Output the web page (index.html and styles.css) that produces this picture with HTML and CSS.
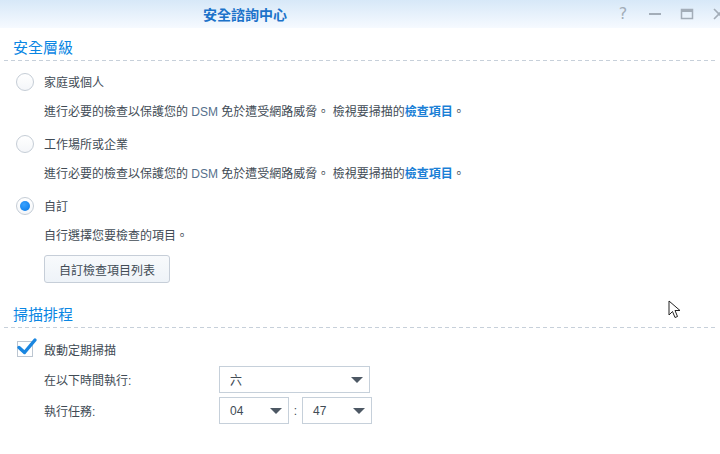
FILE: index.html
```html
<!DOCTYPE html>
<html lang="zh-Hant">
<head>
    <meta charset="UTF-8">
    <meta name="viewport" content="width=device-width, initial-scale=1.0">
    <title>安全諮詢中心</title>
    <link rel="stylesheet" href="styles.css">
</head>
<body>
    <div class="window">
        <header class="titlebar">
            <span class="title">安全諮詢中心</span>
            <div class="controls">
                <span class="ctl ctl-help">?</span>
                <svg class="ctl" width="14" height="14" viewBox="0 0 14 14"><rect x="1" y="6" width="12" height="2" fill="#a3adb8"/></svg>
                <svg class="ctl" width="14" height="14" viewBox="0 0 14 14"><rect x="1.5" y="2.5" width="11" height="9" fill="none" stroke="#a3adb8" stroke-width="1.5"/><rect x="1" y="2" width="12" height="3" fill="#a3adb8"/></svg>
                <svg class="ctl" width="14" height="14" viewBox="0 0 14 14"><path d="M2 2 L12 12 M12 2 L2 12" stroke="#a3adb8" stroke-width="1.6"/></svg>
            </div>
        </header>

        <main class="content">
            <!-- 安全層級 -->
            <h2 class="section-title">安全層級</h2>
            <div class="option">
                <span class="radio"></span>
                <span>家庭或個人</span>
            </div>
            <div class="desc">進行必要的檢查以保護您的 <span class="latin">DSM</span> 免於遭受網路威脅。 檢視要掃描的<a href="#" class="link">檢查項目</a>。</div>
            <div class="option">
                <span class="radio"></span>
                <span>工作場所或企業</span>
            </div>
            <div class="desc">進行必要的檢查以保護您的 <span class="latin">DSM</span> 免於遭受網路威脅。 檢視要掃描的<a href="#" class="link">檢查項目</a>。</div>
            <div class="option">
                <span class="radio checked"></span>
                <span>自訂</span>
            </div>
            <div class="desc">自行選擇您要檢查的項目。</div>
            <div class="desc-btn">
                <button class="button">自訂檢查項目列表</button>
            </div>

            <!-- 掃描排程 -->
            <h2 class="section-title second">掃描排程</h2>
            <div class="option check-row">
                <span class="checkbox">
                    <svg width="22" height="20" viewBox="0 0 22 20"><path d="M3 10.5 L8.5 15.5 L19 3" fill="none" stroke="#1a86e0" stroke-width="3.4" stroke-linecap="round" stroke-linejoin="round"/></svg>
                </span>
                <span>啟動定期掃描</span>
            </div>
            <div class="field">
                <label class="field-label">在以下時間執行:</label>
                <div class="select wide"><span>六</span><i class="arrow"></i></div>
            </div>
            <div class="field">
                <label class="field-label">執行任務:</label>
                <div class="select small"><span>04</span><i class="arrow"></i></div>
                <span class="colon">:</span>
                <div class="select small"><span>47</span><i class="arrow"></i></div>
            </div>
        </main>

        <svg class="cursor" width="14" height="20" viewBox="0 0 14 20"><path d="M1 1 L1 15 L4.5 11.5 L7 17.5 L9.5 16.5 L7 10.5 L12 10.5 Z" fill="#fff" stroke="#222" stroke-width="1"/></svg>
    </div>
</body>
</html>
```

FILE: styles.css
```css
body {
    margin: 0;
    padding: 0;
    background-color: #ffffff;
    font-family: "Liberation Sans", "Noto Sans CJK TC", sans-serif;
    font-size: 12px;
    color: #414b55;
}
.window {
    position: relative;
    width: 720px;
    height: 454px;
    overflow: hidden;
    background-color: #ffffff;
}
.titlebar {
    height: 28px;
    display: flex;
    align-items: center;
    background: linear-gradient(#d7e8f8, #f6faff);
}
.title {
    margin-left: 203px;
    font-family: "Noto Sans CJK TC", sans-serif;
    font-size: 14px;
    font-weight: bold;
    color: #1c72c9;
}
.controls {
    margin-left: auto;
    display: flex;
    align-items: center;
    gap: 18px;
    margin-right: -6px;
}
.ctl {
    display: block;
}
.ctl-help {
    font-family: "DejaVu Sans", sans-serif;
    font-size: 16px;
    line-height: 14px;
    color: #a3adb8;
    width: 14px;
    text-align: center;
}
.content {
    padding: 0 4px;
}
.section-title {
    margin: 9px 0 0;
    padding: 0 0 4px 9px;
    height: 20px;
    line-height: 20px;
    font-size: 15px;
    font-weight: normal;
    color: #0a86e3;
    font-family: "Noto Sans CJK TC", sans-serif;
    background: repeating-linear-gradient(90deg, #c7d0da 0 4px, transparent 4px 7px) bottom / 100% 1px no-repeat;
}
.section-title.second {
    margin-top: 21px;
}
.option {
    display: flex;
    align-items: center;
    height: 31px;
    padding-left: 12px;
}
.option:first-of-type {
    margin-top: 5px;
}
.radio {
    box-sizing: border-box;
    width: 18px;
    height: 18px;
    border: 1px solid #c5cdd6;
    border-radius: 50%;
    background: linear-gradient(#ffffff, #f4f6f9);
    margin-right: 10px;
    display: flex;
    align-items: center;
    justify-content: center;
}
.radio.checked::after {
    content: "";
    width: 10px;
    height: 10px;
    border-radius: 50%;
    background: radial-gradient(circle at 40% 35%, #3aa2ff, #0578e6);
}
.desc {
    height: 31px;
    line-height: 31px;
    padding-left: 40px;
}
.latin {
    color: #56708c;
}
.link {
    color: #1a7fd6;
    font-weight: bold;
    text-decoration: none;
}
.desc-btn {
    padding-left: 40px;
    padding-top: 3px;
}
.button {
    height: 28px;
    width: 126px;
    padding: 0;
    font-family: "Liberation Sans", "Noto Sans CJK TC", sans-serif;
    font-size: 12px;
    color: #414b55;
    border: 1px solid #c6ced8;
    border-radius: 3px;
    background: linear-gradient(#f8fafc, #eef3f8);
    cursor: pointer;
}
.check-row {
    margin-top: 6px;
    height: 30px;
}
.checkbox {
    position: relative;
    box-sizing: border-box;
    width: 16px;
    height: 16px;
    border: 1px solid #bcc6d1;
    background-color: #ffffff;
    margin-right: 11px;
    margin-left: 1px;
}
.checkbox svg {
    position: absolute;
    left: -2px;
    top: -5px;
}
.field {
    display: flex;
    align-items: center;
    height: 31px;
    padding-left: 40px;
}
.field-label {
    width: 175px;
}
.select {
    box-sizing: border-box;
    height: 27px;
    border: 1px solid #c6d0da;
    background-color: #ffffff;
    display: flex;
    align-items: center;
    padding: 0 6px 0 10px;
}
.select span {
    flex: 1;
}
.select.wide {
    width: 151px;
}
.select.small {
    width: 70px;
}
.arrow {
    width: 0;
    height: 0;
    border-left: 6px solid transparent;
    border-right: 6px solid transparent;
    border-top: 6px solid #4d5864;
}
.colon {
    width: 13px;
    text-align: center;
}
.cursor {
    position: absolute;
    left: 668px;
    top: 300px;
}
```
